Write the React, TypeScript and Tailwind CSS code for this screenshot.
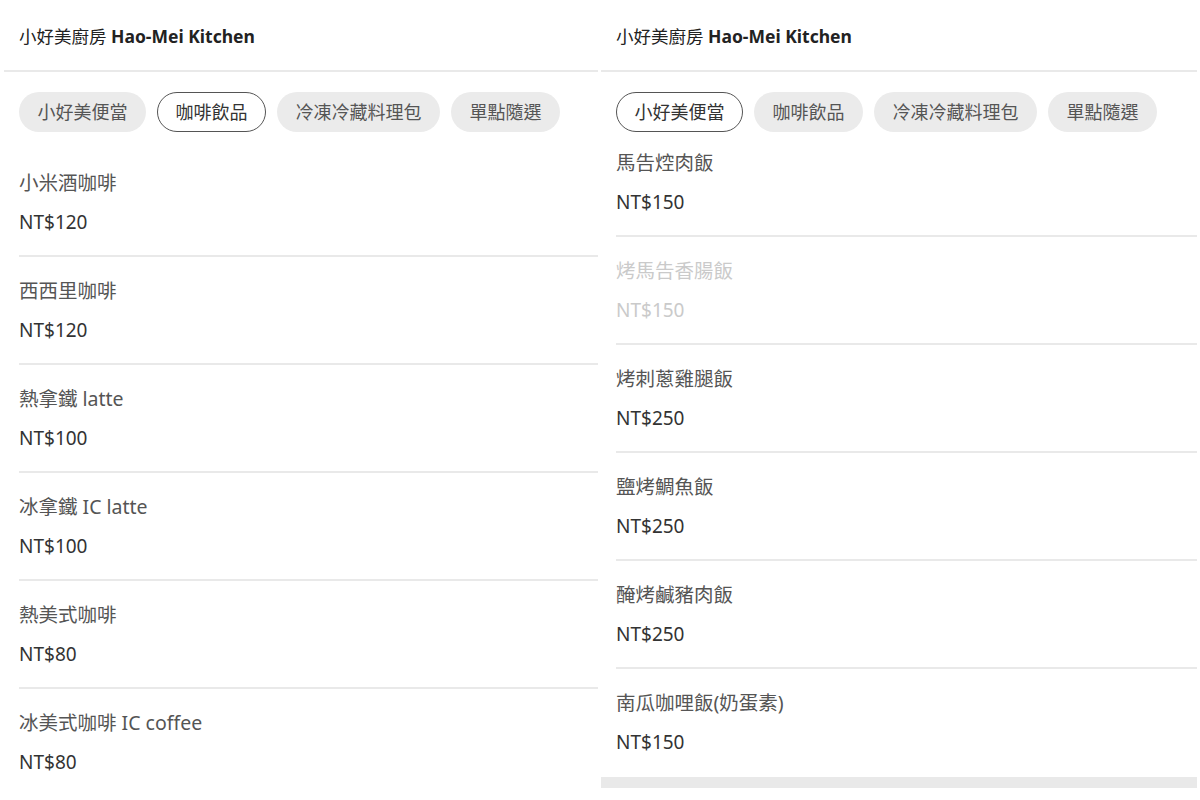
import React from "react"

type Item = { name: string; price: number; soldOut?: boolean }

const categories = ["小好美便當", "咖啡飲品", "冷凍冷藏料理包", "單點隨選"]

const drinks: Item[] = [
  { name: "小米酒咖啡", price: 120 },
  { name: "西西里咖啡", price: 120 },
  { name: "熱拿鐵 latte", price: 100 },
  { name: "冰拿鐵 IC latte", price: 100 },
  { name: "熱美式咖啡", price: 80 },
  { name: "冰美式咖啡 IC coffee", price: 80 },
]

const bento: Item[] = [
  { name: "馬告焢肉飯", price: 150 },
  { name: "烤馬告香腸飯", price: 150, soldOut: true },
  { name: "烤刺蔥雞腿飯", price: 250 },
  { name: "鹽烤鯛魚飯", price: 250 },
  { name: "醃烤鹹豬肉飯", price: 250 },
  { name: "南瓜咖哩飯(奶蛋素)", price: 150 },
]

function Chip({ label, active }: { label: string; active: boolean }) {
  return (
    <div
      className={
        active
          ? "h-[40px] px-[17.5px] flex items-center rounded-full border-[1.5px] border-[#555] bg-white text-[18px] text-[#333]"
          : "h-[40px] px-[17.5px] flex items-center rounded-full border-[1.5px] border-transparent bg-[#ebebeb] text-[18px] text-[#555]"
      }
    >
      {label}
    </div>
  )
}

function MenuRow({ item, last }: { item: Item; last?: boolean }) {
  return (
    <div
      className={
        last
          ? "pt-[20px] pb-[19px]"
          : "pt-[20px] pb-[19px] border-b-2 border-[#e9e9e9]"
      }
    >
      <p
        className={
          item.soldOut
            ? "h-[28px] leading-[28px] text-[19.5px] text-[#cacaca]"
            : "h-[28px] leading-[28px] text-[19.5px] text-[#555]"
        }
      >
        {item.name}
      </p>
      <p
        className={
          item.soldOut
            ? "mt-[11px] h-[28px] leading-[28px] text-[19px] text-[#cacaca]"
            : "mt-[11px] h-[28px] leading-[28px] text-[19px] text-[#333]"
        }
      >
        NT${item.price}
      </p>
    </div>
  )
}

function Panel({
  active,
  items,
  scrolled,
}: {
  active: string
  items: Item[]
  scrolled?: boolean
}) {
  return (
    <div className="flex flex-col">
      {/* Header */}
      <div className="h-[72px] border-b-2 border-[#e9e9e9] flex items-center">
        <h1 className="text-[17.5px] text-[#222] pl-[15px] mt-[2px]">
          小好美廚房 <span className="font-bold">Hao-Mei Kitchen</span>
        </h1>
      </div>

      {/* Category chips */}
      <div className="pl-[15px] pt-[20px] flex gap-[11px] relative z-10">
        {categories.map((c) => (
          <Chip key={c} label={c} active={c === active} />
        ))}
      </div>

      {/* Item list */}
      <div className={scrolled ? "pl-[15px] -mt-[3px]" : "pl-[15px] mt-[17px]"}>
        {items.map((item, i) => (
          <MenuRow key={item.name} item={item} last={i === items.length - 1} />
        ))}
      </div>
      {scrolled && <div className="mt-[2px] h-[11px] bg-[#e9e9e9]" />}
    </div>
  )
}

export default function App() {
  return (
    <div
      className="w-[1200px] h-[800px] overflow-hidden bg-white flex"
      style={{ fontFamily: '"Noto Sans", "Noto Sans CJK TC", sans-serif' }}
    >
      <div className="w-[600px] pl-[4px] pr-[2px]">
        <Panel active="咖啡飲品" items={drinks} />
      </div>
      <div className="w-[600px] pl-[1px] pr-[3px]">
        <Panel active="小好美便當" items={bento} scrolled />
      </div>
    </div>
  )
}
